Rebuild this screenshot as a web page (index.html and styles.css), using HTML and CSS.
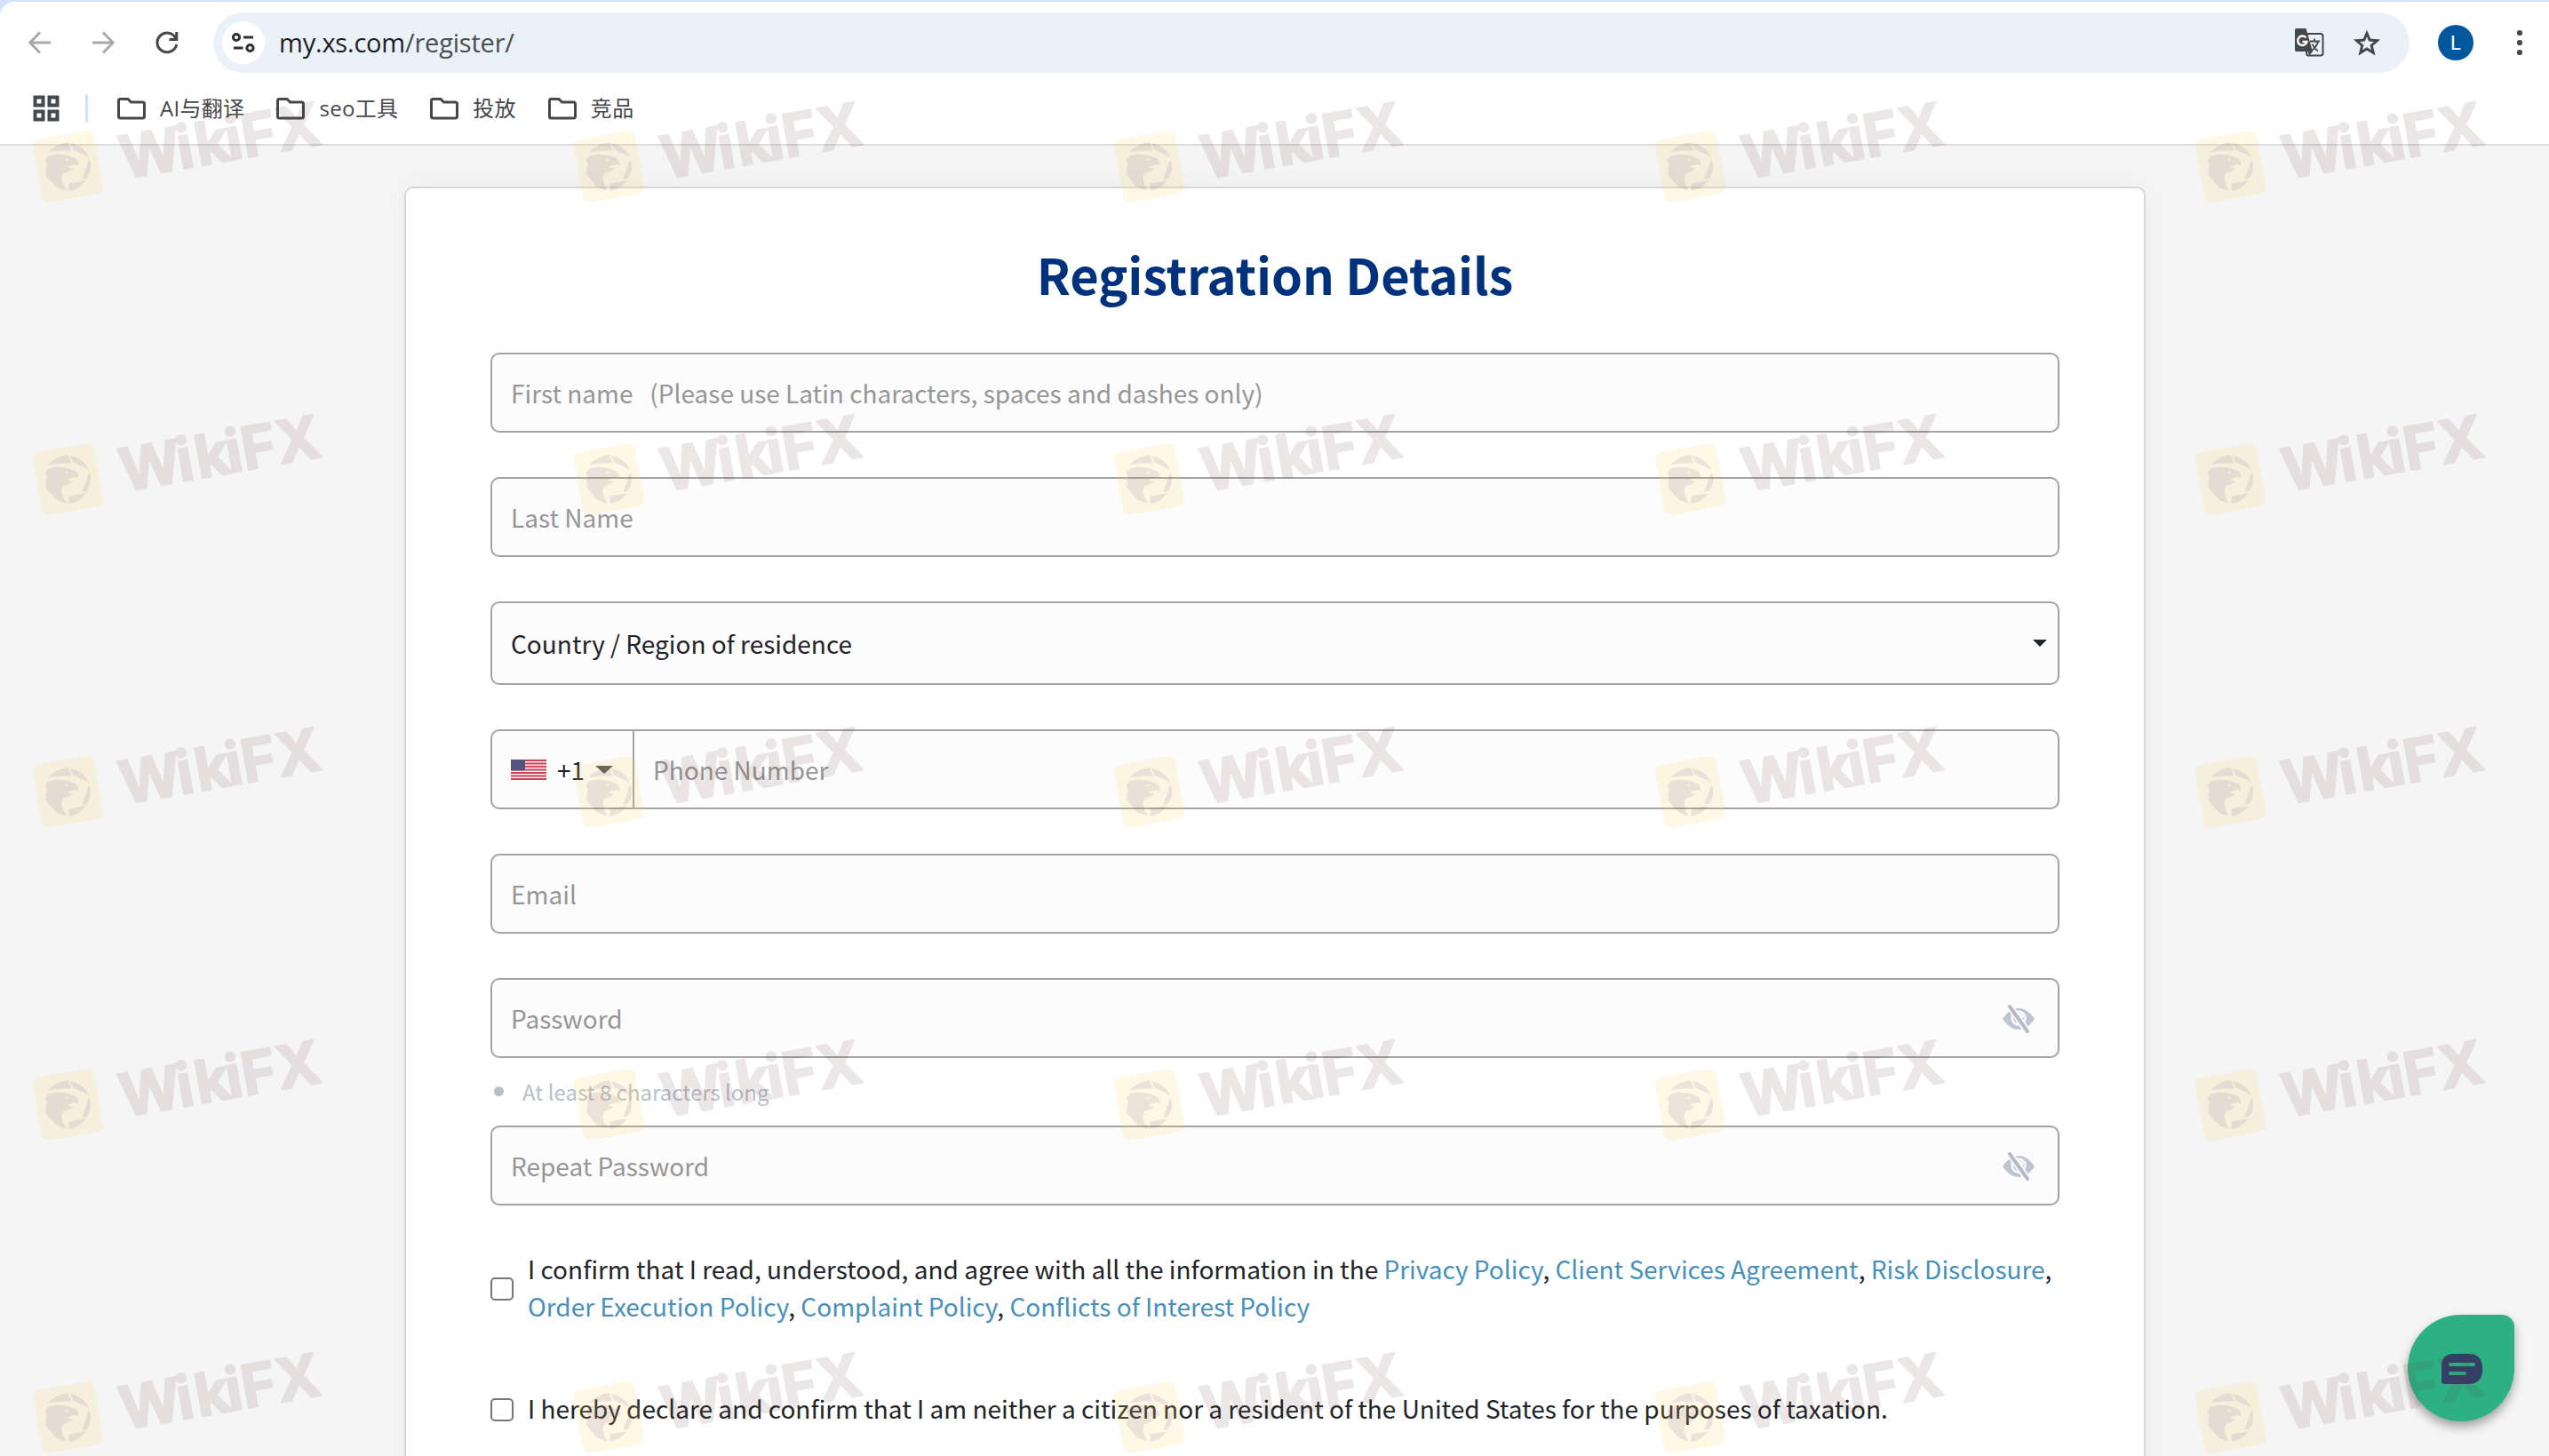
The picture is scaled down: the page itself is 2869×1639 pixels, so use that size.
FILE: index.html
```html
<!DOCTYPE html>
<html lang="en">
<head>
<meta charset="utf-8">
<meta name="viewport" content="width=device-width, initial-scale=1">
<title>Registration Details</title>
<link rel="stylesheet" href="styles.css">
</head>
<body>

<div class="tabstrip"><div class="active_tab"></div></div>

<div class="toolbar">
  <svg class="nav" viewBox="0 0 26 26"><path class="off" d="M25 13H2M13 1.5L1.8 13L13 24.5"/></svg>
  <svg class="nav" viewBox="0 0 26 26"><path class="off" d="M1 13H24M13 1.5L24.2 13L13 24.5"/></svg>
  <svg class="nav" viewBox="0 0 26 26"><path d="M22.8 8A11 10.8 0 1 0 23.8 15M23.8 1V9.4H15.5"/></svg>
  <div class="omnibox">
    <span class="site_info">
      <svg width="26" height="24" viewBox="0 0 26 24"><circle cx="5" cy="6" r="3.6"/><path d="M13 6H24M2 18H12.500"/><circle cx="20.500" cy="18" r="3.600"/></svg>
    </span>
    <span class="url">my.xs.com<span>/register/</span></span>
    <svg class="translate" width="34" height="34" viewBox="0 0 34 34">
      <rect x="14" y="7" width="18.500" height="24.500" rx="2.500" fill="none" stroke="#45484b" stroke-width="2"/>
      <path d="M3 1H13.500L21 27L17 31.500L15.500 27H3Q1 27 1 25V3Q1 1 3 1Z" fill="#45484b"/>
      <path d="M13.500 11.500A5.200 5.200 0 1 0 14.500 16H9.500" fill="none" stroke="#fff" stroke-width="2.400"/>
      <path d="M18 15.500H29M23 12.500V15.500M27 15.500C26 20 23 24 19 26.500M20.500 18.500C22 22 24 24.500 27 26.500" fill="none" stroke="#45484b" stroke-width="1.900"/>
    </svg>
    <svg class="star" width="32" height="31" viewBox="0 0 32 31"><path d="M16 4.500L19.200 12.100L27.500 12.800L21.200 18.200L23.200 26.300L16 22L8.800 26.300L10.800 18.200L4.500 12.800L12.800 12.100Z"/></svg>
  </div>
  <div class="avatar">L</div>
  <svg class="kebab" width="8" height="30" viewBox="0 0 8 30"><circle cx="4" cy="4" r="3.100"/><circle cx="4" cy="15" r="3.100"/><circle cx="4" cy="26" r="3.100"/></svg>
</div>

<div class="bookmarks">
  <svg class="apps" width="30" height="30" viewBox="0 0 30 30"><path d="M2.500 2.500H11.500V11.500H2.500ZM18.500 2.500H27.500V11.500H18.500ZM2.500 18.500H11.500V27.500H2.500ZM18.500 18.500H27.500V27.500H18.500Z"/></svg>
  <span class="divider"></span>
  <div class="bookmark"><svg width="32" height="26" viewBox="0 0 32 26"><path d="M3 2.500H12L15.500 6H28.500Q30.500 6 30.500 8V22Q30.500 24 28.500 24H3.500Q1.500 24 1.500 22V4.500Q1.500 2.500 3 2.500Z"/></svg>AI与翻译</div>
  <div class="bookmark"><svg width="32" height="26" viewBox="0 0 32 26"><path d="M3 2.500H12L15.500 6H28.500Q30.500 6 30.500 8V22Q30.500 24 28.500 24H3.500Q1.500 24 1.500 22V4.500Q1.500 2.500 3 2.500Z"/></svg>seo工具</div>
  <div class="bookmark"><svg width="32" height="26" viewBox="0 0 32 26"><path d="M3 2.500H12L15.500 6H28.500Q30.500 6 30.500 8V22Q30.500 24 28.500 24H3.500Q1.500 24 1.500 22V4.500Q1.500 2.500 3 2.500Z"/></svg>投放</div>
  <div class="bookmark"><svg width="32" height="26" viewBox="0 0 32 26"><path d="M3 2.500H12L15.500 6H28.500Q30.500 6 30.500 8V22Q30.500 24 28.500 24H3.500Q1.500 24 1.500 22V4.500Q1.500 2.500 3 2.500Z"/></svg>竞品</div>
</div>

<div class="page">
  <form class="card">
    <h1>Registration Details</h1>

    <div class="field">First name&nbsp;&nbsp; (Please use Latin characters, spaces and dashes only)</div>
    <div class="field">Last Name</div>
    <div class="field select">Country / Region of residence<i class="caret"></i></div>
    <div class="field phone">
      <div class="code">
        <svg width="40" height="23" viewBox="0 0 40 23">
          <rect width="40" height="23" fill="#fbf3f3"/>
          <path d="M0 1H40M0 4.500H40M0 8H40M0 11.500H40M0 15H40M0 18.500H40M0 22H40" stroke="#c94455" stroke-width="2.100"/>
          <rect width="16" height="12.400" fill="#52557f"/>
        </svg>
        <span>+1</span><i class="caret"></i>
      </div>
      <div class="number">Phone Number</div>
    </div>
    <div class="field">Email</div>
    <div class="field password">Password
      <svg class="eye" width="38" height="34" viewBox="0 0 38 34"><path class="lid" d="M1 17C7 8.500 13 5 19 5S31 8.500 37 17C31 25.500 25 29 19 29S7 25.500 1 17Z"/><circle cx="19" cy="16" r="7.500"/><path class="glint" d="M19 11.500Q23.500 11.500 23.500 16"/><path class="gap" d="M9 3L29 31"/><path class="slash" d="M9 3L29 31"/></svg>
    </div>
    <ul class="rules"><li>At least 8 characters long</li></ul>
    <div class="field password">Repeat Password
      <svg class="eye" width="38" height="34" viewBox="0 0 38 34"><path class="lid" d="M1 17C7 8.500 13 5 19 5S31 8.500 37 17C31 25.500 25 29 19 29S7 25.500 1 17Z"/><circle cx="19" cy="16" r="7.500"/><path class="glint" d="M19 11.500Q23.500 11.500 23.500 16"/><path class="gap" d="M9 3L29 31"/><path class="slash" d="M9 3L29 31"/></svg>
    </div>

    <label class="agree">
      <input type="checkbox">
      <span>I confirm that I read, understood, and agree with all the information in the <a>Privacy Policy</a>, <a>Client Services Agreement</a>, <a>Risk Disclosure</a>,<br><a>Order Execution Policy</a>, <a>Complaint Policy</a>, <a>Conflicts of Interest Policy</a></span>
    </label>
    <label class="agree">
      <input type="checkbox">
      <span>I hereby declare and confirm that I am neither a citizen nor a resident of the United States for the purposes of taxation.</span>
    </label>
  </form>
</div>

<div class="chat">
  <svg width="46" height="34" viewBox="0 0 46 34"><path d="M14 0H30Q46 0 46 16V18Q46 34 30 34H3Q0 34 0 31V14Q0 0 14 0Z" fill="#343f68"/><path d="M10 12H36M10 22H26" stroke="#2db184" stroke-width="4" stroke-linecap="round"/></svg>
</div>

<!-- watermark tiles, the first one is cloned over the whole window -->
<div class="watermarks" id="watermarks">
  <svg class="mark" viewBox="0 0 608 352">
    <g transform="translate(77.500 99.500) rotate(-10)">
      <rect class="badge" x="-35" y="-36" width="70" height="72" rx="8"/>
      <g class="bird">
        <path d="M-19 -20Q-8 -28 5 -27L7 -17L-4 -19Z"/>
        <path d="M7 -26Q22 -20 25 -6L19 -11L9 -18Z"/>
        <path d="M25 -4Q28 8 18 17L13 17L22 1Z"/>
        <path d="M-2 19L17 19Q8 28 -4 27Z"/>
        <path fill-rule="evenodd" d="M-24 -12L-19 -16C-12 -16 -4 -16 6 -10Q13 -8 12 1L9 -1L3 -1L-1 1L5 3Q0 7 -6 6C-11 11 -10 18 -6 26Q-15 24 -20 16L-22 12Q-26 7 -27 1L-25 3V-4L-23 -5ZM-2 -9L3 -7L-1 -6Z"/>
      </g>
      <text x="59 124 145 180 198 238" y="25">WikiFX</text>
    </g>
  </svg>
</div>

<script>
var marks = document.getElementById("watermarks");
var first = marks.querySelector(".mark");
for (var i = 1; i < 25; i++) {
    marks.appendChild(first.cloneNode(true));
}
</script>

</body>
</html>
```
FILE: styles.css
```css
* { box-sizing: border-box; }

html {
    height: 1639px;
    overflow: hidden;
}

body {
    margin: 0;
    height: 1639px;
    position: relative;
    overflow: hidden;
    background-color: #f5f5f5;
    font-family: "Noto Sans CJK SC", "Noto Sans", sans-serif;
    font-size: 28px;
    color: #212529;
}

svg { display: block; flex: none; }

/* Browser window */
.tabstrip {
    height: 2px;
    background-color: #d3e3fd;
}

.active_tab {
    width: 180px;
    height: 2px;
    margin-left: 853px;
    background-color: #fff;
}

.toolbar {
    display: flex;
    align-items: center;
    height: 92px;
    padding: 0 29px 0 32px;
    background-color: #fff;
    box-shadow: -12px -2px 0 #d3e3fd;
    border-radius: 16px 0 0 0;
}

.nav {
    width: 26px;
    height: 26px;
    margin-right: 45px;
    fill: none;
    stroke: #45484b;
    stroke-width: 3;
}

.nav:nth-child(2) { margin-right: 46px; }
.nav:nth-child(3) { margin-right: 39px; }

.nav .off { stroke: #a9a9ab; }

.omnibox {
    display: flex;
    align-items: center;
    width: 2472px;
    height: 68px;
    padding: 0 32px 0 10px;
    border-radius: 34px;
    background-color: #ebf1f9;
}

.site_info {
    display: flex;
    align-items: center;
    justify-content: center;
    width: 48px;
    height: 48px;
    border-radius: 50%;
    background-color: #fff;
}

.site_info svg {
    fill: none;
    stroke: #303134;
    stroke-width: 3;
}

.url {
    flex: 1;
    margin-left: 16px;
    padding-bottom: 1px;
    font-family: "Open Sans", "Noto Sans", sans-serif;
    font-size: 29px;
    line-height: 40px;
    letter-spacing: -0.2px;
    color: #1f2023;
}

.url span { color: #4a4d51; }

.star {
    margin-left: 32px;
    fill: none;
    stroke: #45484b;
    stroke-width: 3;
}

.avatar {
    width: 40px;
    height: 40px;
    margin-left: 32px;
    border-radius: 50%;
    background-color: #01579b;
    color: #fff;
    font-family: Roboto, sans-serif;
    font-size: 22px;
    line-height: 41px;
    text-align: center;
}

.kebab {
    margin-left: 48px;
    fill: #45484b;
}

.bookmarks {
    display: flex;
    align-items: center;
    height: 70px;
    padding: 0 0 12px 37px;
    border-bottom: 2px solid #dcdcdd;
    background-color: #fff;
}

.apps {
    fill: none;
    stroke: #45484b;
    stroke-width: 4;
}

.divider {
    width: 3px;
    height: 32px;
    margin: 0 33px 0 29px;
    border-radius: 2px;
    background-color: #cfe0fc;
}

.bookmark {
    display: flex;
    align-items: center;
    gap: 16px;
    margin-right: 36px;
    font-family: "Open Sans", "Noto Sans CJK SC", sans-serif;
    font-size: 24px;
    line-height: 34px;
    letter-spacing: 0.3px;
    color: #45484b;
    white-space: nowrap;
}

.bookmark svg {
    fill: none;
    stroke: #45484b;
    stroke-width: 3;
}

/* Registration card */
.page {
    padding: 46px 0 0 455px;
}

.card {
    width: 1960px;
    height: 1500px;
    padding: 54px 95px 0;
    border: 2px solid #d6d6dc;
    border-radius: 10px;
    background-color: #fff;
    box-shadow: 0 0 30px rgba(0, 0, 0, 0.04);
}

h1 {
    margin: 0 0 47px;
    font-size: 56px;
    font-weight: bold;
    line-height: 84px;
    letter-spacing: -0.1px;
    text-align: center;
    color: #00317c;
}

.field {
    display: flex;
    align-items: center;
    height: 90px;
    margin-bottom: 50px;
    padding: 0 22px 0 21px;
    border: 2px solid #a3a3a3;
    border-radius: 10px;
    background-color: #fcfcfc;
    color: #969696;
    line-height: 42px;
    white-space: nowrap;
}

.select {
    height: 94px;
    padding-right: 12px;
    color: #212529;
}

.caret {
    border: 8px solid transparent;
    border-top-color: #212529;
    border-bottom: none;
}

.select .caret {
    margin-left: auto;
}

.phone { padding: 0; }

.code {
    display: flex;
    align-items: center;
    width: 160px;
    height: 86px;
    padding-left: 21px;
    border-right: 2px solid #a3a3a3;
    color: #212529;
}

.code span { margin: 0 12px 0 12px; }

.code .caret {
    border-width: 9px 10px 0;
    border-top-color: #555;
}

.number { padding-left: 21px; }

.password { justify-content: space-between; padding-right: 25px; }

.password:has(+ .rules) { margin-bottom: 0; }

.eye { margin-top: 1px; }
.eye .lid { fill: #bfc4d2; }
.eye circle { fill: none; stroke: #fcfcfc; stroke-width: 2.5; }
.eye .glint { fill: none; stroke: #fcfcfc; stroke-width: 2.5; }
.eye .gap { stroke: #fcfcfc; stroke-width: 8; }
.eye .slash { stroke: #b6bac4; stroke-width: 4; stroke-linecap: round; }

.rules {
    height: 76px;
    margin: 0;
    padding: 0;
    list-style: none;
    font-size: 24px;
    line-height: 76px;
    color: #b9bfca;
}

.rules li {
    display: flex;
    align-items: center;
}

.rules li::before {
    content: "";
    width: 11px;
    height: 11px;
    margin: 0 21px 2px 4px;
    border-radius: 50%;
    background-color: #b9bfca;
}

/* Checkboxes */
.agree {
    display: flex;
    align-items: center;
    margin-bottom: 74px;
    line-height: 42px;
    white-space: nowrap;
}

.field + .agree { margin-top: 51px; }

.agree input {
    appearance: none;
    flex: none;
    width: 26px;
    height: 26px;
    margin: 2px 16px 0 0;
    border: 2px solid #767676;
    border-radius: 5px;
    background-color: #fff;
}

.agree span { margin-top: -1px; }

.agree a { color: #4690bb; }

/* Chat button over the page */
.chat {
    position: absolute;
    top: 1480px;
    right: 39px;
    display: flex;
    align-items: center;
    justify-content: center;
    width: 120px;
    height: 120px;
    padding: 2px 0 0 2px;
    border-radius: 60px 14px 60px 60px;
    background-color: #2db184;
    box-shadow: 0 6px 12px rgba(0, 0, 0, 0.35);
}

/* Watermark over everything */
.watermarks {
    position: absolute;
    top: 88px;
    left: -1px;
    right: 0;
    bottom: 0;
    overflow: hidden;
    display: grid;
    grid-template-columns: repeat(5, 608.5px);
    grid-auto-rows: 352px;
    pointer-events: none;
}

.mark {
    width: 608px;
    height: 352px;
}

.mark .badge { fill: rgba(252, 205, 80, 0.15); }
.mark .bird { fill: rgba(100, 70, 140, 0.12); }

.mark text {
    font-family: Inter, sans-serif;
    font-size: 67px;
    font-weight: bold;
    fill: #60302d;
    stroke: #60302d;
    stroke-width: 2;
    stroke-linejoin: round;
    opacity: 0.11;
}
```
